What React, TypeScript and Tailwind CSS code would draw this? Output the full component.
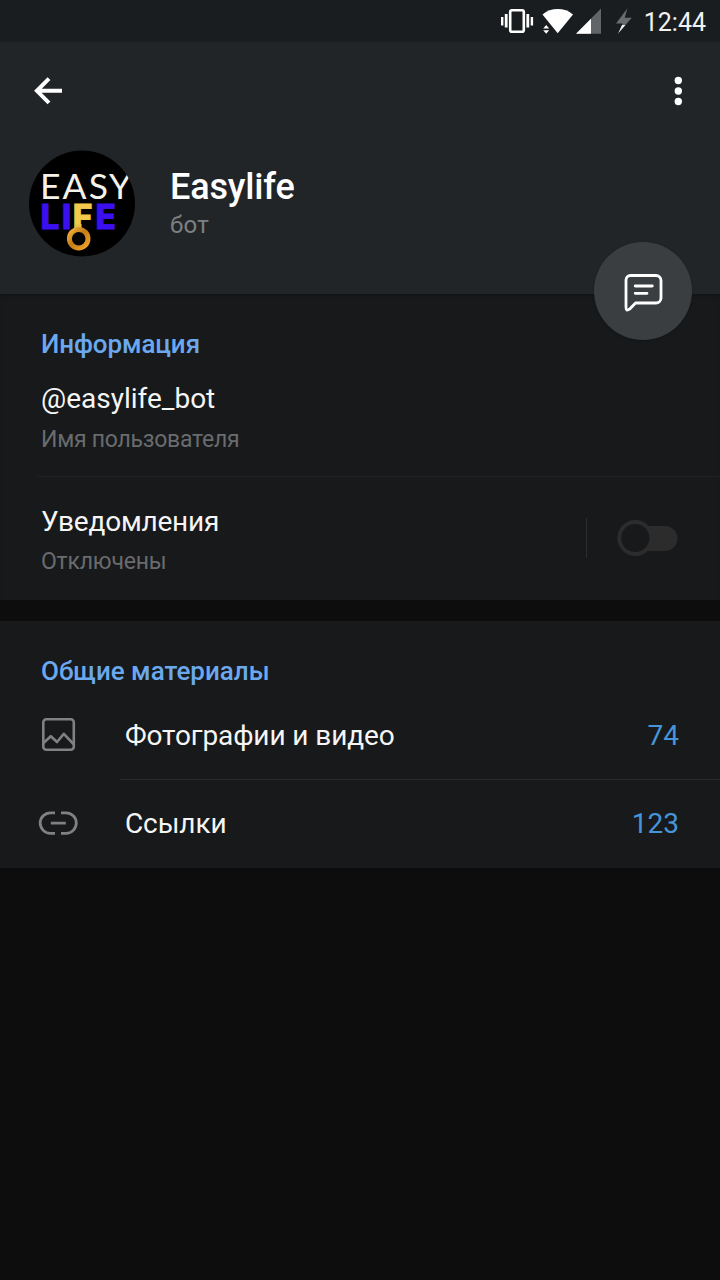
type MediaRow = {
  icon: "photo" | "link";
  label: string;
  count: number;
};

const mediaRows: MediaRow[] = [
  { icon: "photo", label: "Фотографии и видео", count: 74 },
  { icon: "link", label: "Ссылки", count: 123 },
];

export default function App() {
  return (
    <div className="min-h-[1280px] w-[720px] bg-[#0d0d0d] font-[Roboto,sans-serif] text-[#f5f5f5]">
      <StatusBar />

      <header className="relative h-[252px] bg-[#212528]">
        <div className="flex h-[98px] items-center justify-between pr-[36px] pl-[32px]">
          <button aria-label="Назад">
            <BackIcon />
          </button>
          <button aria-label="Меню">
            <DotsIcon />
          </button>
        </div>

        <div className="flex pt-[10px] pl-[29px]">
          <Avatar />
          <div className="pt-[15px] pl-[35px]">
            <h1 className="text-[36px] leading-[44px] font-medium tracking-[-0.15px] whitespace-nowrap text-white">
              Easylife
            </h1>
            <p className="mt-px text-[24px] leading-[30px] tracking-[0.3px] text-[#7d8082]">бот</p>
          </div>
        </div>

        <button
          aria-label="Написать"
          className="absolute top-[200px] left-[594px] flex size-[98px] items-center justify-center rounded-full bg-[#3a3e41] shadow-[0_1px_3px_rgba(0,0,0,0.2)]"
        >
          <MessageIcon />
        </button>
      </header>

      <section className="h-[306px] bg-[#17191b] shadow-[inset_0_4px_4px_-3px_rgba(0,0,0,0.3)]">
        <h2 className="pt-[34px] pl-[41px] text-[26px] leading-[32px] font-medium tracking-[-0.1px] text-[#6ba8ee]">
          Информация
        </h2>
        <div className="mt-[21px] pl-[41px]">
          <p className="text-[28px] leading-[36px]">@easylife_bot</p>
          <p className="mt-[9px] text-[23px] leading-[28px] tracking-[-0.25px] text-[#6a6b6d]">
            Имя пользователя
          </p>
        </div>
        <div className="mt-[22px] ml-[37px] h-px bg-[#202224]" />
        <div className="flex justify-between pt-[27px] pr-[42px] pl-[41px]">
          <div>
            <p className="text-[28px] leading-[36px] tracking-[-0.2px]">Уведомления</p>
            <p className="mt-[8px] text-[23px] leading-[28px] tracking-[-0.2px] text-[#6a6b6d]">
              Отключены
            </p>
          </div>
          <div className="mt-[14px] flex h-[40px] items-center">
            <div className="h-[40px] w-px bg-[#2b2d2e]" />
            <Toggle />
          </div>
        </div>
      </section>

      <section className="mt-[21px] h-[247px] bg-[#17191b]">
        <h2 className="pt-[34px] pl-[41px] text-[26px] leading-[32px] font-medium text-[#6ba8ee]">
          Общие материалы
        </h2>
        <div className="mt-[4px]">
          {mediaRows.map((row, index) => (
            <div key={row.label}>
              {index > 0 && <div className="-mb-px ml-[120px] h-px bg-[#292b2d]" />}
              <div className="flex h-[88px] items-center pr-[41px] pl-[38px]">
                {row.icon === "photo" ? <PhotoIcon /> : <LinkIcon />}
                <span className="ml-[47px] flex-1 pt-px text-[28px] leading-[36px] tracking-[-0.1px]">
                  {row.label}
                </span>
                <span className="pt-px text-[28px] leading-[36px] text-[#4595d8]">{row.count}</span>
              </div>
            </div>
          ))}
        </div>
      </section>
    </div>
  );
}

function StatusBar() {
  return (
    <div className="flex h-[42px] items-center justify-between bg-[#1a1d1f] pr-[14px] pl-[500px]">
      <svg width="134" height="42" viewBox="500 0 134 42" fill="#fff">
        <rect x="510.2" y="10.2" width="13.6" height="21.6" rx="1.8" fill="none" stroke="#fff" strokeWidth="2.6" />
        <path d="M501 17h2.4v8.5H501zM504.8 14h2.8v13.5H504.8zM526.4 14h2.8v13.5h-2.8zM530.7 17h2.4v8.5h-2.4z" />
        <path d="M542.5 14.5C551 7.2 564.5 7.2 573 14.5L557.7 33.2Z" />
        <path d="M543.2 28.5l3-3.5 3 3.5zM543.2 30.2h6l-3 3.5z" />
        <path d="M601 8.5V33.8H576Z" fill="#626566" />
        <path d="M591 18.7V33.8H576Z" />
        <path d="M627.5 8.3L616 23.5h6.8l-5.2 10.6L631.8 17.8H624.7Z" fill="#6a6d6e" />
        <path d="M621.5 25h7l-10.5 9.5z" fill="#f2f2f2" clipPath="url(#bolt)" />
        <clipPath id="bolt">
          <path d="M627.5 8.3L616 23.5h6.8l-5.2 10.6L631.8 17.8H624.7Z" />
        </clipPath>
      </svg>
      <span className="pt-[3px] text-[25px] leading-[30px] text-[#f2f2f2]">12:44</span>
    </div>
  );
}

function BackIcon() {
  return (
    <svg width="32" height="32" viewBox="0 0 32 32" fill="none" stroke="#fff" strokeWidth="4">
      <path d="M30 15.8H4.9M17 3.7L4.9 15.8L17 27.9" />
    </svg>
  );
}

function DotsIcon() {
  return (
    <svg width="12" height="32" viewBox="0 0 12 32" fill="#fff">
      <circle cx="6.3" cy="5.5" r="3.7" />
      <circle cx="6.3" cy="16" r="3.7" />
      <circle cx="6.3" cy="26.5" r="3.7" />
    </svg>
  );
}

function Avatar() {
  return (
    <svg width="106" height="107" viewBox="29 150 106 107" className="shrink-0">
      <defs>
        <linearGradient id="ring" x1="0" y1="0" x2="1" y2="1">
          <stop offset="0" stopColor="#f0b43c" />
          <stop offset="0.45" stopColor="#c47a14" />
          <stop offset="1" stopColor="#f0a52c" />
        </linearGradient>
        <clipPath id="face">
          <circle cx="82" cy="203.5" r="53" />
        </clipPath>
      </defs>
      <circle cx="82" cy="203.5" r="53" fill="#000" />
      <g clipPath="url(#face)">
        <text x="40 62.6 88.8 109" y="199.3" fontFamily="Lato" fontSize="35.5" fill="#f5f2ea">
          EASY
        </text>
        <text
          x="40.5 61.8 72.8 95.5"
          y="228.8"
          fontFamily="Inter"
          fontWeight="800"
          fontSize="33.5"
          fill="#3b10f0"
          stroke="#3b10f0"
          strokeWidth="0.8"
        >
          LI<tspan fill="#f3ca4c" stroke="#f3ca4c">F</tspan>E
        </text>
        <rect x="75" y="224" width="6.5" height="6" fill="#f0bd45" />
        <circle cx="78.7" cy="238.7" r="9.3" fill="#000" stroke="url(#ring)" strokeWidth="5" />
      </g>
    </svg>
  );
}

function MessageIcon() {
  return (
    <svg
      width="42"
      height="42"
      viewBox="622 270 42 42"
      fill="none"
      stroke="#fff"
      strokeWidth="2.8"
      strokeLinecap="round"
      strokeLinejoin="round"
    >
      <path d="M630.5 275.5H656A5 5 0 0 1 661 280.5V298A5 5 0 0 1 656 303H635.5L629.5 309.2Q626 311.5 626 307.5V280A4.5 4.5 0 0 1 630.5 275.5Z" />
      <path d="M635.2 286H652.3M635.2 293.3H647" />
    </svg>
  );
}

function Toggle() {
  return (
    <svg width="61" height="38" viewBox="617 519 61 38" className="ml-[30px]">
      <rect x="625" y="526" width="52.5" height="25" rx="12.5" fill="#2c2c2c" />
      <circle cx="635.3" cy="538" r="16" fill="#17191b" stroke="#2c2c2c" strokeWidth="3.8" />
    </svg>
  );
}

function PhotoIcon() {
  return (
    <svg width="40" height="40" viewBox="38 715 40 40" fill="none" stroke="#7f8183" strokeWidth="2.6">
      <rect x="43.3" y="719.3" width="30.5" height="30.5" rx="3" />
      <path d="M43.5 743L50.8 736.2L57 742L63.8 733.8L73.5 744" strokeLinejoin="round" />
    </svg>
  );
}

function LinkIcon() {
  return (
    <svg width="40" height="40" viewBox="38 803 40 40" fill="none" stroke="#7f8183" strokeWidth="2.8">
      <path d="M55 812.8H50.5A10.3 10.3 0 0 0 50.5 833.4H55M61 812.8H66A10.3 10.3 0 0 1 66 833.4H61M50.8 823.1H65.8" />
    </svg>
  );
}
